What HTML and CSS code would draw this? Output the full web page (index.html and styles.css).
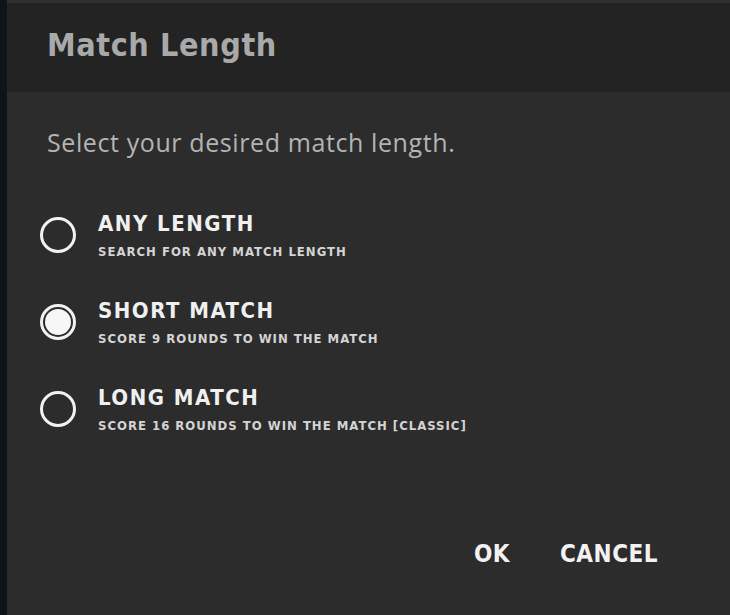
FILE: index.html
```html
<!DOCTYPE html>
<html>
<head>
<meta charset="utf-8">
<link rel="stylesheet" href="styles.css">
</head>
<body>
<div class="screen">
  <div class="edge"></div>
  <div class="dialog">
    <div class="header"><h1 class="title">Match Length</h1></div>
    <div class="content">
      <p class="prompt">Select your desired match length.</p>
      <div class="options">
        <div class="option">
          <span class="radio"></span>
          <div class="text">
            <div class="label">ANY LENGTH</div>
            <div class="desc">SEARCH FOR ANY MATCH LENGTH</div>
          </div>
        </div>
        <div class="option">
          <span class="radio checked"></span>
          <div class="text">
            <div class="label">SHORT MATCH</div>
            <div class="desc">SCORE 9 ROUNDS TO WIN THE MATCH</div>
          </div>
        </div>
        <div class="option">
          <span class="radio"></span>
          <div class="text">
            <div class="label">LONG MATCH</div>
            <div class="desc">SCORE 16 ROUNDS TO WIN THE MATCH [CLASSIC]</div>
          </div>
        </div>
      </div>
      <div class="actions">
        <span class="btn">OK</span>
        <span class="btn">CANCEL</span>
      </div>
    </div>
  </div>
</div>
</body>
</html>
```
FILE: styles.css
```css
html, body {
  margin: 0;
  padding: 0;
  background: #2c2c2c;
}
.screen {
  display: flex;
  width: 730px;
  height: 615px;
  overflow: hidden;
}
.edge {
  width: 7px;
  flex: none;
  background: #101417;
}
.dialog {
  flex: 1;
  display: flex;
  flex-direction: column;
  background: #2c2c2c;
}
.header {
  height: 92px;
  flex: none;
  background: #232323;
  border-top: 3px solid #303030;
  box-sizing: border-box;
  padding-left: 40px;
  display: flex;
  align-items: flex-start;
}
.title {
  margin: 22px 0 0 0;
  font-family: "DejaVu Sans Condensed", "DejaVu Sans", sans-serif;
  font-weight: bold;
  font-size: 32px;
  letter-spacing: 0.6px;
  color: #a9a9a9;
  line-height: 40px;
}
.content {
  flex: 1;
  display: flex;
  flex-direction: column;
  padding-left: 40px;
}
.prompt {
  margin: 35px 0 0 0;
  font-family: "Open Sans", sans-serif;
  font-size: 25px;
  letter-spacing: 0.6px;
  color: #b4b4b4;
  line-height: 30px;
}
.options {
  display: flex;
  flex-direction: column;
  gap: 36px;
  margin-top: 51px;
}
.option {
  display: flex;
  align-items: center;
  gap: 22px;
}
.radio {
  width: 36px;
  height: 36px;
  box-sizing: border-box;
  border: 3px solid #f2f2f2;
  border-radius: 50%;
  flex: none;
  position: relative;
  margin-left: -7px;
  margin-top: 2px;
}
.radio.checked::after {
  content: "";
  position: absolute;
  left: 2px;
  top: 2px;
  width: 26px;
  height: 26px;
  border-radius: 50%;
  background: #f7f7f7;
}
.text {
  display: flex;
  flex-direction: column;
  gap: 9px;
  padding-top: 4px;
}
.label {
  font-family: "DejaVu Sans Condensed", "DejaVu Sans", sans-serif;
  font-weight: bold;
  font-size: 22px;
  letter-spacing: 1.5px;
  color: #f0f0f0;
  line-height: 24px;
}
.desc {
  font-family: "DejaVu Sans Condensed", "DejaVu Sans", sans-serif;
  font-weight: bold;
  font-size: 13px;
  letter-spacing: 1px;
  color: #d4d4d4;
  line-height: 14px;
}
.actions {
  display: flex;
  justify-content: flex-end;
  gap: 50px;
  margin-top: auto;
  margin-bottom: 47px;
  padding-right: 72px;
}
.btn {
  font-family: "DejaVu Sans Condensed", "DejaVu Sans", sans-serif;
  font-weight: bold;
  font-size: 24px;
  letter-spacing: 0.5px;
  color: #f2f2f2;
  line-height: 28px;
}
```
